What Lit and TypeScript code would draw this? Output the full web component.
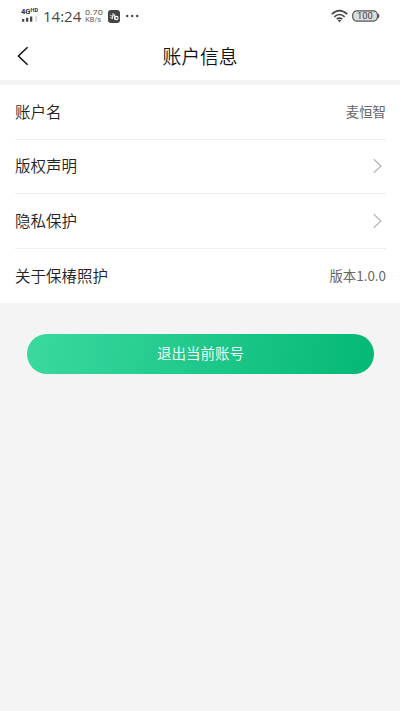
import { LitElement, html, css } from "lit";
import { customElement, property } from "lit/decorators.js";

@customElement("status-bar")
class StatusBar extends LitElement {
  static styles = css`
    :host { display: flex; height: 32px; box-sizing: border-box; padding: 0 20px 0 21px; color: #444; font-family: Roboto, sans-serif; align-items: center; }
    .signal { width: 18px; height: 16px; display: block; margin-top: -2px; }
    .net { font: 700 7.5px Roboto, sans-serif; }
    .hd { font: 700 5.5px Roboto, sans-serif; }
    .time { font: 400 15px/20px "Open Sans", "Noto Sans", sans-serif; margin-left: 4px; width: 38px; white-space: nowrap; color: #484848; }
    .speed { width: 18px; height: 16px; margin-left: 4px; }
    .rate { font: 400 8px Roboto, sans-serif; fill: #606060; }
    .unit { font: 400 7px Roboto, sans-serif; fill: #606060; }
    .app { width: 12px; height: 13px; margin-left: 5px; }
    .dots { width: 14px; height: 4px; margin-left: 5px; }
    .spacer { flex: 1; }
    .wifi { width: 17px; height: 14px; }
    .battery { width: 28px; height: 12px; margin-left: 4px; }
    .level { font: 400 9px Roboto, sans-serif; }
  `;
  render() {
    return html`
      <svg class="signal" viewBox="0 0 18 16">
        <text class="net" x="0" y="7" fill="#333" textLength="9.5" lengthAdjust="spacingAndGlyphs">4G</text>
        <text class="hd" x="9.5" y="5" fill="#333" textLength="7.5" lengthAdjust="spacingAndGlyphs">HD</text>
        <g fill="#484848">
          <rect x="1" y="12" width="2.3" height="2.7" /><rect x="5" y="10.8" width="2.3" height="3.9" />
          <rect x="9" y="9.5" width="2.3" height="5.2" /><rect x="14" y="8.5" width="2.3" height="6.2" fill="#ddd" />
        </g>
      </svg>
      <div class="time">14:24</div>
      <svg class="speed" viewBox="0 0 18 16">
        <text class="rate" x="0" y="7.2" textLength="18" lengthAdjust="spacingAndGlyphs">0.70</text>
        <text class="unit" x="0.3" y="14" textLength="15.6" lengthAdjust="spacingAndGlyphs">KB/s</text>
      </svg>
      <svg class="app" viewBox="0 0 12 13">
        <rect width="12" height="13" rx="3" fill="#444" />
        <path d="M2.2 4.7l1.4 1.6M5.2 3L4.4 8.7 2.4 7.4M5.2 6.2l1.5-1.7v5.2" fill="none" stroke="#fff" stroke-width="1" />
        <circle cx="8.5" cy="8" r="1.6" fill="none" stroke="#fff" stroke-width="1.1" />
      </svg>
      <svg class="dots" viewBox="0 0 14 4" fill="#444"><circle cx="2.2" cy="2" r="1.2" /><circle cx="7.2" cy="2" r="1.2" /><circle cx="12.2" cy="2" r="1.2" /></svg>
      <div class="spacer"></div>
      <svg class="wifi" viewBox="0 0 17 14" fill="none" stroke="#444" stroke-width="1.6">
        <path d="M.8 5.2Q8.5-1.8 16.2 5.2M3.3 7.8Q8.5 3.2 13.7 7.8M5.7 10.2Q8.5 7.9 11.3 10.2" />
        <path d="M6.7 11.3Q8.5 10 10.3 11.3L8.5 13.3z" fill="#444" stroke="none" />
      </svg>
      <svg class="battery" viewBox="0 0 28 12">
        <rect x=".7" y=".9" width="24.8" height="10.2" rx="4" fill="#dcdcdc" stroke="#555" stroke-width="1.2" />
        <path d="M26.3 4q1.2 2 0 4z" fill="#555" stroke="#555" />
        <text class="level" x="5" y="9.2" fill="#444" textLength="15.8" lengthAdjust="spacingAndGlyphs">100</text>
      </svg>`;
  }
}

@customElement("info-row")
class InfoRow extends LitElement {
  @property() label = "";
  @property() value = "";
  static styles = css`
    :host { display: flex; align-items: center; justify-content: space-between; height: 54.6px; box-sizing: border-box; margin: 0 14px 0 15px; border-bottom: 1px solid #eee; }
    :host(:last-child) { border-bottom-color: transparent; }
    .label { font-size: 15.5px; color: #222; padding-bottom: 2px; }
    .value { font-size: 13.4px; font-weight: 400; color: #666; padding-bottom: 1px; }
    .arrow { width: 9px; height: 16px; margin-right: 4px; }
  `;
  render() {
    return html`<span class="label">${this.label}</span>
      ${this.value
        ? html`<span class="value">${this.value}</span>`
        : html`<svg class="arrow" viewBox="0 0 9 16"><path d="M.8 1.2L8 8 .8 14.8" fill="none" stroke="#b4b4b4" stroke-width="1.2" /></svg>`}`;
  }
}

@customElement("app-root")
class AppRoot extends LitElement {
  static styles = css`
    :host { display: block; height: 711px; background: #f4f4f4; overflow: hidden; font-family: "Noto Sans CJK SC", sans-serif; font-weight: 350; }
    .top { background: #fff; height: 80px; }
    .nav { display: grid; grid-template-columns: 60px 1fr 60px; align-items: center; height: 48px; }
    .back { width: 12px; height: 20px; margin-left: 17px; }
    .title { margin: 0; font-size: 18.8px; font-weight: 350; line-height: 28px; color: #111; text-align: center; }
    .list { background: #fff; margin-top: 5px; height: 218px; }
    .logout { display: block; width: 347px; height: 40px; margin: 31px 0 0 27px; padding: 0 0 3px; border: 0; border-radius: 20px; background: linear-gradient(100deg, #3bd99f, #04b876); color: #fff; font: 350 14.5px "Noto Sans CJK SC", sans-serif; }
  `;
  render() {
    return html`
      <header class="top">
        <status-bar></status-bar>
        <nav class="nav">
          <svg class="back" viewBox="0 0 12 20"><path d="M10.6 1.2L1.4 10l9.2 8.8" fill="none" stroke="#111" stroke-width="1.5" /></svg>
          <h1 class="title">账户信息</h1>
        </nav>
      </header>
      <main>
        <section class="list">
          <info-row label="账户名" value="麦恒智"></info-row>
          <info-row label="版权声明"></info-row>
          <info-row label="隐私保护"></info-row>
          <info-row label="关于保椿照护" value="版本1.0.0"></info-row>
        </section>
        <button class="logout">退出当前账号</button>
      </main>`;
  }
}
